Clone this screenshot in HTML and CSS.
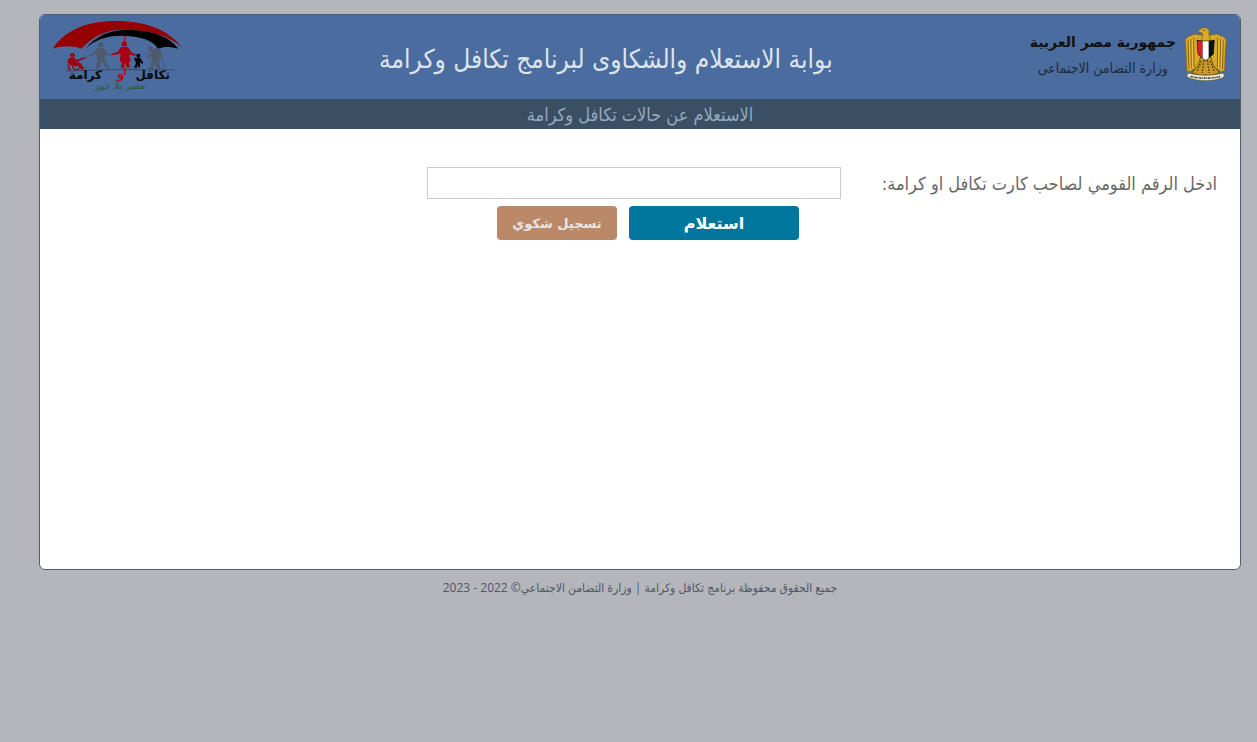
FILE: index.html
```html
<!DOCTYPE html>
<html lang="ar" dir="rtl">
<head>
    <meta charset="UTF-8">
    <title>بوابة الاستعلام والشكاوى لبرنامج تكافل وكرامة</title>
    <link rel="stylesheet" href="styles.css">
</head>
<body>
    <div class="page">
        <header class="header">
            <div class="ministry">
                <svg class="emblem" viewBox="12 18 132 168" aria-hidden="true">
                    <!-- wings -->
                    <path fill="#d9a928" stroke="#7a5a14" stroke-width="2" d="M60 42 L44 39 L24 47 L15 57 L18 94 L20 150 L30 153 L48 140 L60 148 L94 148 L106 140 L124 153 L134 150 L136 94 L139 57 L130 47 L110 39 L94 42 Z"/>
                    <path fill="none" stroke="#8a6416" stroke-width="3" d="M24 58 L27 146 M32 54 L34 142 M41 50 L42 138 M130 58 L127 146 M122 54 L120 142 M113 50 L112 138"/>
                    <path fill="none" stroke="#f2cf55" stroke-width="2" d="M28 58 L31 146 M37 54 L38 138 M126 58 L123 146 M117 54 L116 138"/>
                    <!-- tail and legs -->
                    <path fill="#c99a24" stroke="#4c390f" stroke-width="2" d="M62 108 L92 108 L100 132 L118 156 L96 162 L58 162 L36 156 L54 132 Z"/>
                    <path fill="none" stroke="#4c390f" stroke-width="4" stroke-dasharray="5 4" d="M64 120 L50 154 M72 118 L66 156 M82 118 L88 156 M90 120 L104 154"/>
                    <!-- head -->
                    <path fill="#d9a928" stroke="#7a5a14" stroke-width="2" d="M62 64 L68 44 L66 36 L54 32 L60 25 L70 20 L82 21 L88 30 L87 44 L94 64 Z"/>
                    <circle cx="72" cy="28" r="2" fill="#3a2c0c"/>
                    <!-- shield -->
                    <path fill="#111" d="M50 56 Q77 62 104 56 L101 100 L77 120 L53 100 Z"/>
                    <path fill="#d8222c" d="M52 59 Q60 61 68 61 L68 111 L55 99 Z"/>
                    <path fill="#fff" d="M68 61 H86 V111 L77 118 L68 111 Z"/>
                    <!-- ribbon -->
                    <path fill="#efe9d4" stroke="#6b5a30" stroke-width="2" d="M24 156 Q50 163 77 163 Q104 163 130 156 L134 166 L124 172 Q100 180 77 179 Q54 180 30 172 L20 166 Z"/>
                    <path fill="none" stroke="#222" stroke-width="4" stroke-dasharray="6 2 3 2" d="M32 166 Q54 172 77 171 Q100 172 122 166"/>
                </svg>
                <div class="ministry-text">
                    <strong>جمهورية مصر العربية</strong>
                    <span>وزارة التضامن الاجتماعى</span>
                </div>
            </div>

            <h1>بوابة الاستعلام والشكاوى لبرنامج تكافل وكرامة</h1>

            <svg class="logo" viewBox="48 24 390 216" role="img" aria-label="تكافل وكرامة">
                <!-- umbrella -->
                <path fill="#960000" d="M50 113 C84 60 150 30 240 30 C330 30 400 58 438 110 C400 72 340 57 262 56 C210 56 170 76 136 113 C108 103 80 104 50 113 Z"/>
                <path fill="#000" d="M147 113 C182 74 220 58 270 57 C350 57 398 76 427 113 C402 106 384 106 366 113 C352 88 312 76 268 75 C214 72 180 86 147 113 Z"/>
                <path fill="none" stroke="#b00010" stroke-width="3" d="M266 74 V98"/>
                <!-- ground -->
                <path fill="none" stroke="#2e3b4c" stroke-width="2" d="M90 180 Q250 172 416 177"/>
                <!-- wheelchair -->
                <g fill="#a00010">
                    <circle cx="109" cy="133" r="7"/>
                    <path d="M98 142 L112 139 L122 146 L148 138 L149 142 L122 153 L116 151 L118 157 L134 157 L146 174 L136 176 L128 165 L112 166 L101 162 L94 154 Z"/>
                    <circle cx="121" cy="165" r="11" fill="none" stroke="#a00010" stroke-width="4"/>
                    <path d="M97 160 L104 178 L98 178 L94 162 Z"/>
                </g>
                <!-- adults in grey -->
                <g fill="#4e5a6c">
                    <circle cx="194" cy="101" r="8"/>
                    <path d="M184 111 L204 111 L211 126 L226 130 L226 134 L206 131 L206 145 L218 168 L224 172 L212 173 L198 150 L190 171 L178 172 L184 149 L182 127 L152 142 L150 138 L174 123 Z"/>
                    <circle cx="343" cy="113" r="7"/>
                    <path d="M346 118 L362 111 L374 117 L377 138 L368 150 L373 174 L362 175 L357 153 L350 174 L334 176 L344 166 L348 136 L334 140 L332 135 L345 130 Z"/>
                </g>
                <path fill="none" stroke="#4e5a6c" stroke-width="3" d="M372 123 L380 140 L384 176"/>
                <!-- mother and child -->
                <g fill="#a80010">
                    <circle cx="265" cy="99" r="8"/>
                    <path d="M254 108 L276 108 L286 124 L300 131 L298 135 L280 130 L284 151 L278 154 L282 169 L272 170 L268 154 L264 170 L254 170 L258 154 L251 151 L254 128 L228 133 L225 129 L246 122 Z"/>
                </g>
                <g fill="#000">
                    <circle cx="307" cy="134" r="6"/>
                    <path d="M300 141 L313 141 L322 156 L318 159 L313 151 L312 169 L306 169 L306 160 L302 171 L294 170 L300 157 L294 140 Z"/>
                </g>
                <path fill="none" stroke="#b00010" stroke-width="4" d="M266 170 V192"/>
                <text class="logo-name" x="350" y="203">تكافل</text>
                <text class="logo-and" x="254" y="200">و</text>
                <text class="logo-name" x="148" y="203">كرامة</text>
                <text class="logo-slogan" x="252" y="233">مصر بلا عوز</text>
            </svg>
        </header>

        <h2 class="subtitle">الاستعلام عن حالات تكافل وكرامة</h2>

        <main>
            <form class="inquiry-form">
                <label for="nationalId">ادخل الرقم القومي لصاحب كارت تكافل او كرامة:</label>
                <input type="text" id="nationalId" name="nationalId">
                <div class="actions">
                    <button type="submit" class="btn-inquiry">استعلام</button>
                    <button type="button" class="btn-complaint">تسجيل شكوي</button>
                </div>
            </form>
        </main>
    </div>

    <footer>
        جميع الحقوق محفوظة برنامج تكافل وكرامة | وزارة التضامن الاجتماعي© <bdi dir="rtl">2022 - 2023</bdi>
    </footer>
</body>
</html>
```

FILE: styles.css
```css
* { box-sizing: border-box; }
body {
    font-family: 'DejaVu Sans Condensed', 'DejaVu Sans', Tahoma, sans-serif;
    margin: 14px 16px 0 39px;
    background: #b5b6bc;
    color: #696969;
}
.page {
    min-height: 556px;
    background: white;
    border: 1px solid #496077;
    border-radius: 6px;
    overflow: hidden;
}
.header {
    display: flex;
    align-items: center;
    justify-content: space-between;
    min-height: 84px;
    padding: 2px 12px 6px;
    background: #4b6c9e;
}
.header h1 {
    margin: 0;
    padding-top: 8px;
    color: #dde4ec;
    font-size: 26px;
    font-weight: normal;
}
.ministry {
    display: flex;
    align-items: center;
    gap: 8px;
}
.emblem {
    width: 44px;
    height: 56px;
}
.ministry-text {
    display: flex;
    flex-direction: column;
    align-items: center;
    color: #111;
    font-family: 'DejaVu Sans', Tahoma, sans-serif;
    font-size: 14px;
    line-height: 26px;
}
.ministry-text span {
    color: #1d2a3c;
    font-family: 'DejaVu Sans Condensed', 'DejaVu Sans', sans-serif;
}
.logo {
    width: 130px;
    height: 72px;
}
.logo text {
    font-family: 'DejaVu Sans', Tahoma, sans-serif;
    text-anchor: middle;
}
.logo-name {
    fill: #0a0a0a;
    font-size: 36px;
    font-weight: bold;
}
.logo-and {
    fill: #c00418;
    font-size: 36px;
    font-weight: bold;
}
.logo-slogan {
    fill: #2f5a3c;
    font-size: 30px;
}
.subtitle {
    margin: 0;
    padding-top: 2px;
    background: #3a4f63;
    color: #93a9bf;
    font-size: 18px;
    font-weight: normal;
    line-height: 28px;
    text-align: center;
}
.inquiry-form {
    display: grid;
    grid-template-columns: 352px 414px;
    gap: 7px 24px;
    align-items: center;
    padding: 38px 23px;
}
.inquiry-form label {
    font-size: 18px;
    white-space: nowrap;
}
.inquiry-form input {
    height: 32px;
    padding: 4px 8px;
    border: 1px solid #ccc;
    font: inherit;
}
.actions {
    grid-column: 2;
    display: flex;
    gap: 12px;
    padding-right: 42px;
}
button {
    height: 34px;
    padding: 0;
    border: none;
    border-radius: 4px;
    cursor: pointer;
    font-family: 'DejaVu Sans', Tahoma, sans-serif;
    font-weight: bold;
}
.btn-inquiry {
    width: 170px;
    background: #00769c;
    color: white;
    font-size: 16px;
}
.btn-complaint {
    width: 120px;
    background: #bb8968;
    color: #e6e6e6;
    font-size: 13px;
}
footer {
    padding-top: 8px;
    color: #4e5766;
    font-family: 'Open Sans', 'DejaVu Sans Condensed', sans-serif;
    font-size: 12px;
    line-height: 20px;
    text-align: center;
}
```
